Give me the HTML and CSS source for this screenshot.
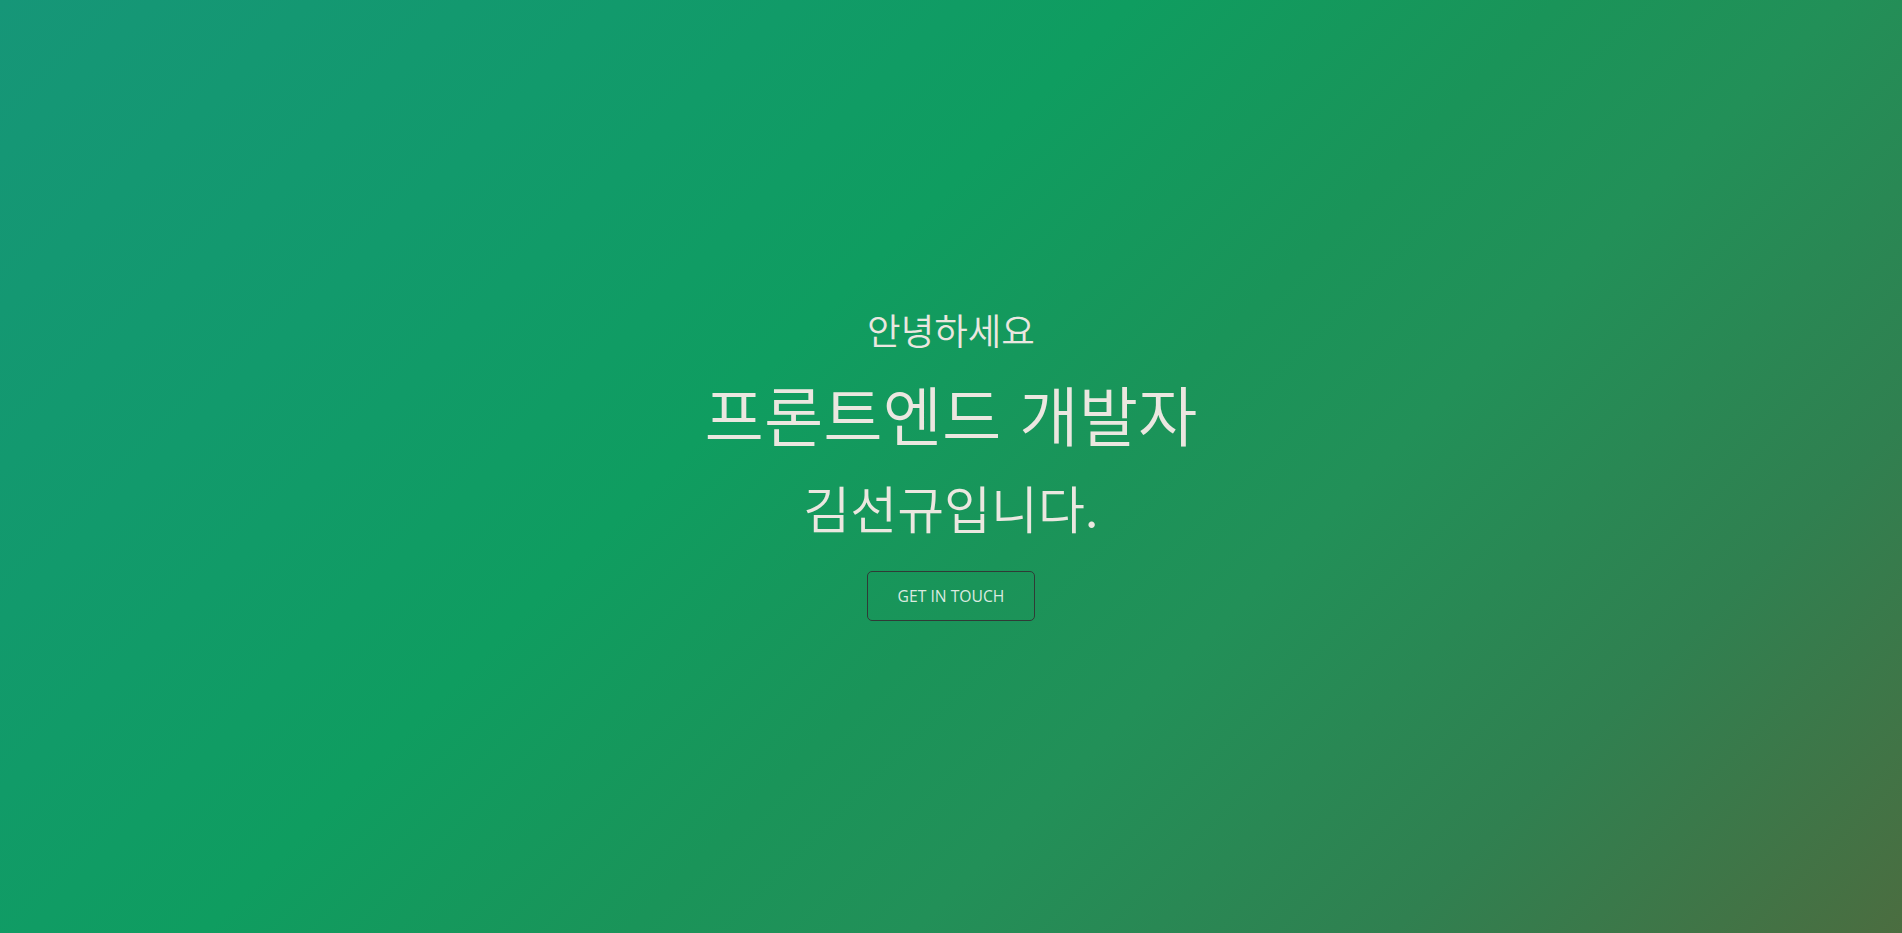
FILE: index.html
```html
<!DOCTYPE html>
<html lang="ko">
<head>
<meta charset="utf-8">
<title>김선규 포트폴리오</title>
<link rel="stylesheet" href="styles.css">
</head>
<body>
<main class="hero">
  <p class="greeting">안녕하세요</p>
  <h1 class="title">프론트엔드 개발자</h1>
  <h2 class="name">김선규입니다.</h2>
  <a class="btn" href="#contact">GET IN TOUCH</a>
</main>
</body>
</html>
```
FILE: styles.css
```css
html, body {
  margin: 0;
  padding: 0;
  height: 100%;
}
body {
  background: linear-gradient(135deg, #169678 0%, #129a6c 22%, #0f9d60 40%, #1a9459 55%, #229058 65%, #308050 82%, #4b6d40 100%);
  font-family: "Noto Sans CJK KR", "Noto Sans", sans-serif;
  color: #ebe7e0;
}
.hero {
  box-sizing: border-box;
  height: 100vh;
  padding-bottom: 4px;
  display: flex;
  flex-direction: column;
  align-items: center;
  justify-content: center;
}
.greeting {
  margin: 0;
  font-size: 36.5px;
  font-weight: 350;
  line-height: 1.2;
}
.title {
  margin: 23px 0 0;
  font-size: 64.5px;
  font-weight: 350;
  line-height: 1.2;
}
.name {
  margin: 24px 0 0;
  font-size: 51px;
  font-weight: 350;
  line-height: 1.2;
}
.btn {
  margin-top: 33px;
  box-sizing: border-box;
  width: 168px;
  height: 50px;
  display: flex;
  align-items: center;
  justify-content: center;
  border: 1px solid #2f3b36;
  border-radius: 5px;
  color: #dcebe0;
  text-decoration: none;
  font-family: "Open Sans", "Noto Sans", sans-serif;
  font-size: 15.7px;
}
```
